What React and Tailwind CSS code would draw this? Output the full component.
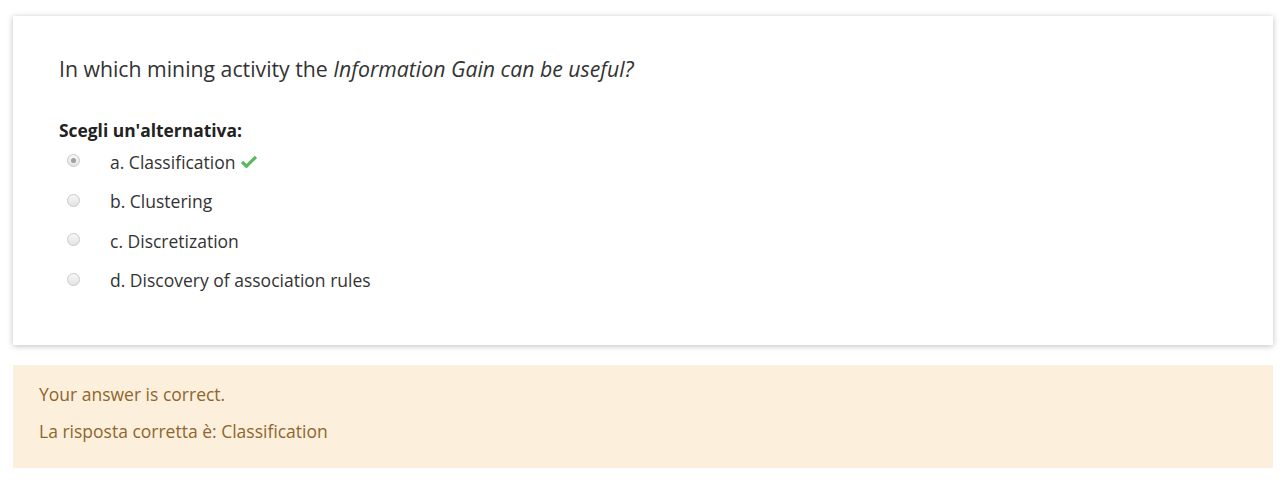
import React from 'react';

const options = [
  { label: 'a. Classification', checked: true, correct: true },
  { label: 'b. Clustering' },
  { label: 'c. Discretization' },
  { label: 'd. Discovery of association rules' },
];

// radio disabilitato, come nel rendering del browser
const Radio = ({ checked }) => (
  <span className="flex h-[13px] w-[13px] items-center justify-center rounded-full border border-[#c9c9c9] bg-gradient-to-b from-[#f7f7f7] to-[#e3e3e3]">
    {checked && <span className="h-[5px] w-[5px] rounded-full bg-[#a0a0a0]" />}
  </span>
);

const Check = () => (
  <svg viewBox="0 0 20 16" className="ml-[5px] h-[15px] w-[18px]" fill="#5cb85c">
    <path d="M1 8.6 L3.6 6 L7.2 9.6 L16.4 0.4 L19 3 L7.2 14.8 Z" />
  </svg>
);

export default function App() {
  return (
    <div className="min-h-[486px] bg-white px-[13px] pt-[16px] font-['Open_Sans',sans-serif]">
      {/* Domanda */}
      <div className="bg-white px-[46px] pt-[38px] pb-[52px] shadow-[0_1px_6px_rgba(0,0,0,0.25)]">
        <p className="text-[21.25px] leading-[30px] text-[#333]">
          In which mining activity the <em>Information Gain can be useful?</em>
        </p>
        <p className="mt-[34px] text-[17.4px] font-bold leading-[24px] text-[#222]">
          Scegli un'alternativa:
        </p>
        <div className="mt-[8px] flex flex-col gap-[15.5px]">
          {options.map((o) => (
            <div key={o.label} className="flex h-[24px] items-center">
              <span className="ml-[8px] mr-[30px] -mt-[3px]">
                <Radio checked={o.checked} />
              </span>
              <span className="text-[17.5px] text-[#333]">{o.label}</span>
              {o.correct && <Check />}
            </div>
          ))}
        </div>
      </div>

      {/* Feedback */}
      <div className="mt-[20px] bg-[#fcefdc] px-[26px] pt-[17px] pb-[25px] text-[17.5px] leading-[24px] text-[#8e662e]">
        <p>Your answer is correct.</p>
        <p className="mt-[13px]">La risposta corretta è: Classification</p>
      </div>
    </div>
  );
}
